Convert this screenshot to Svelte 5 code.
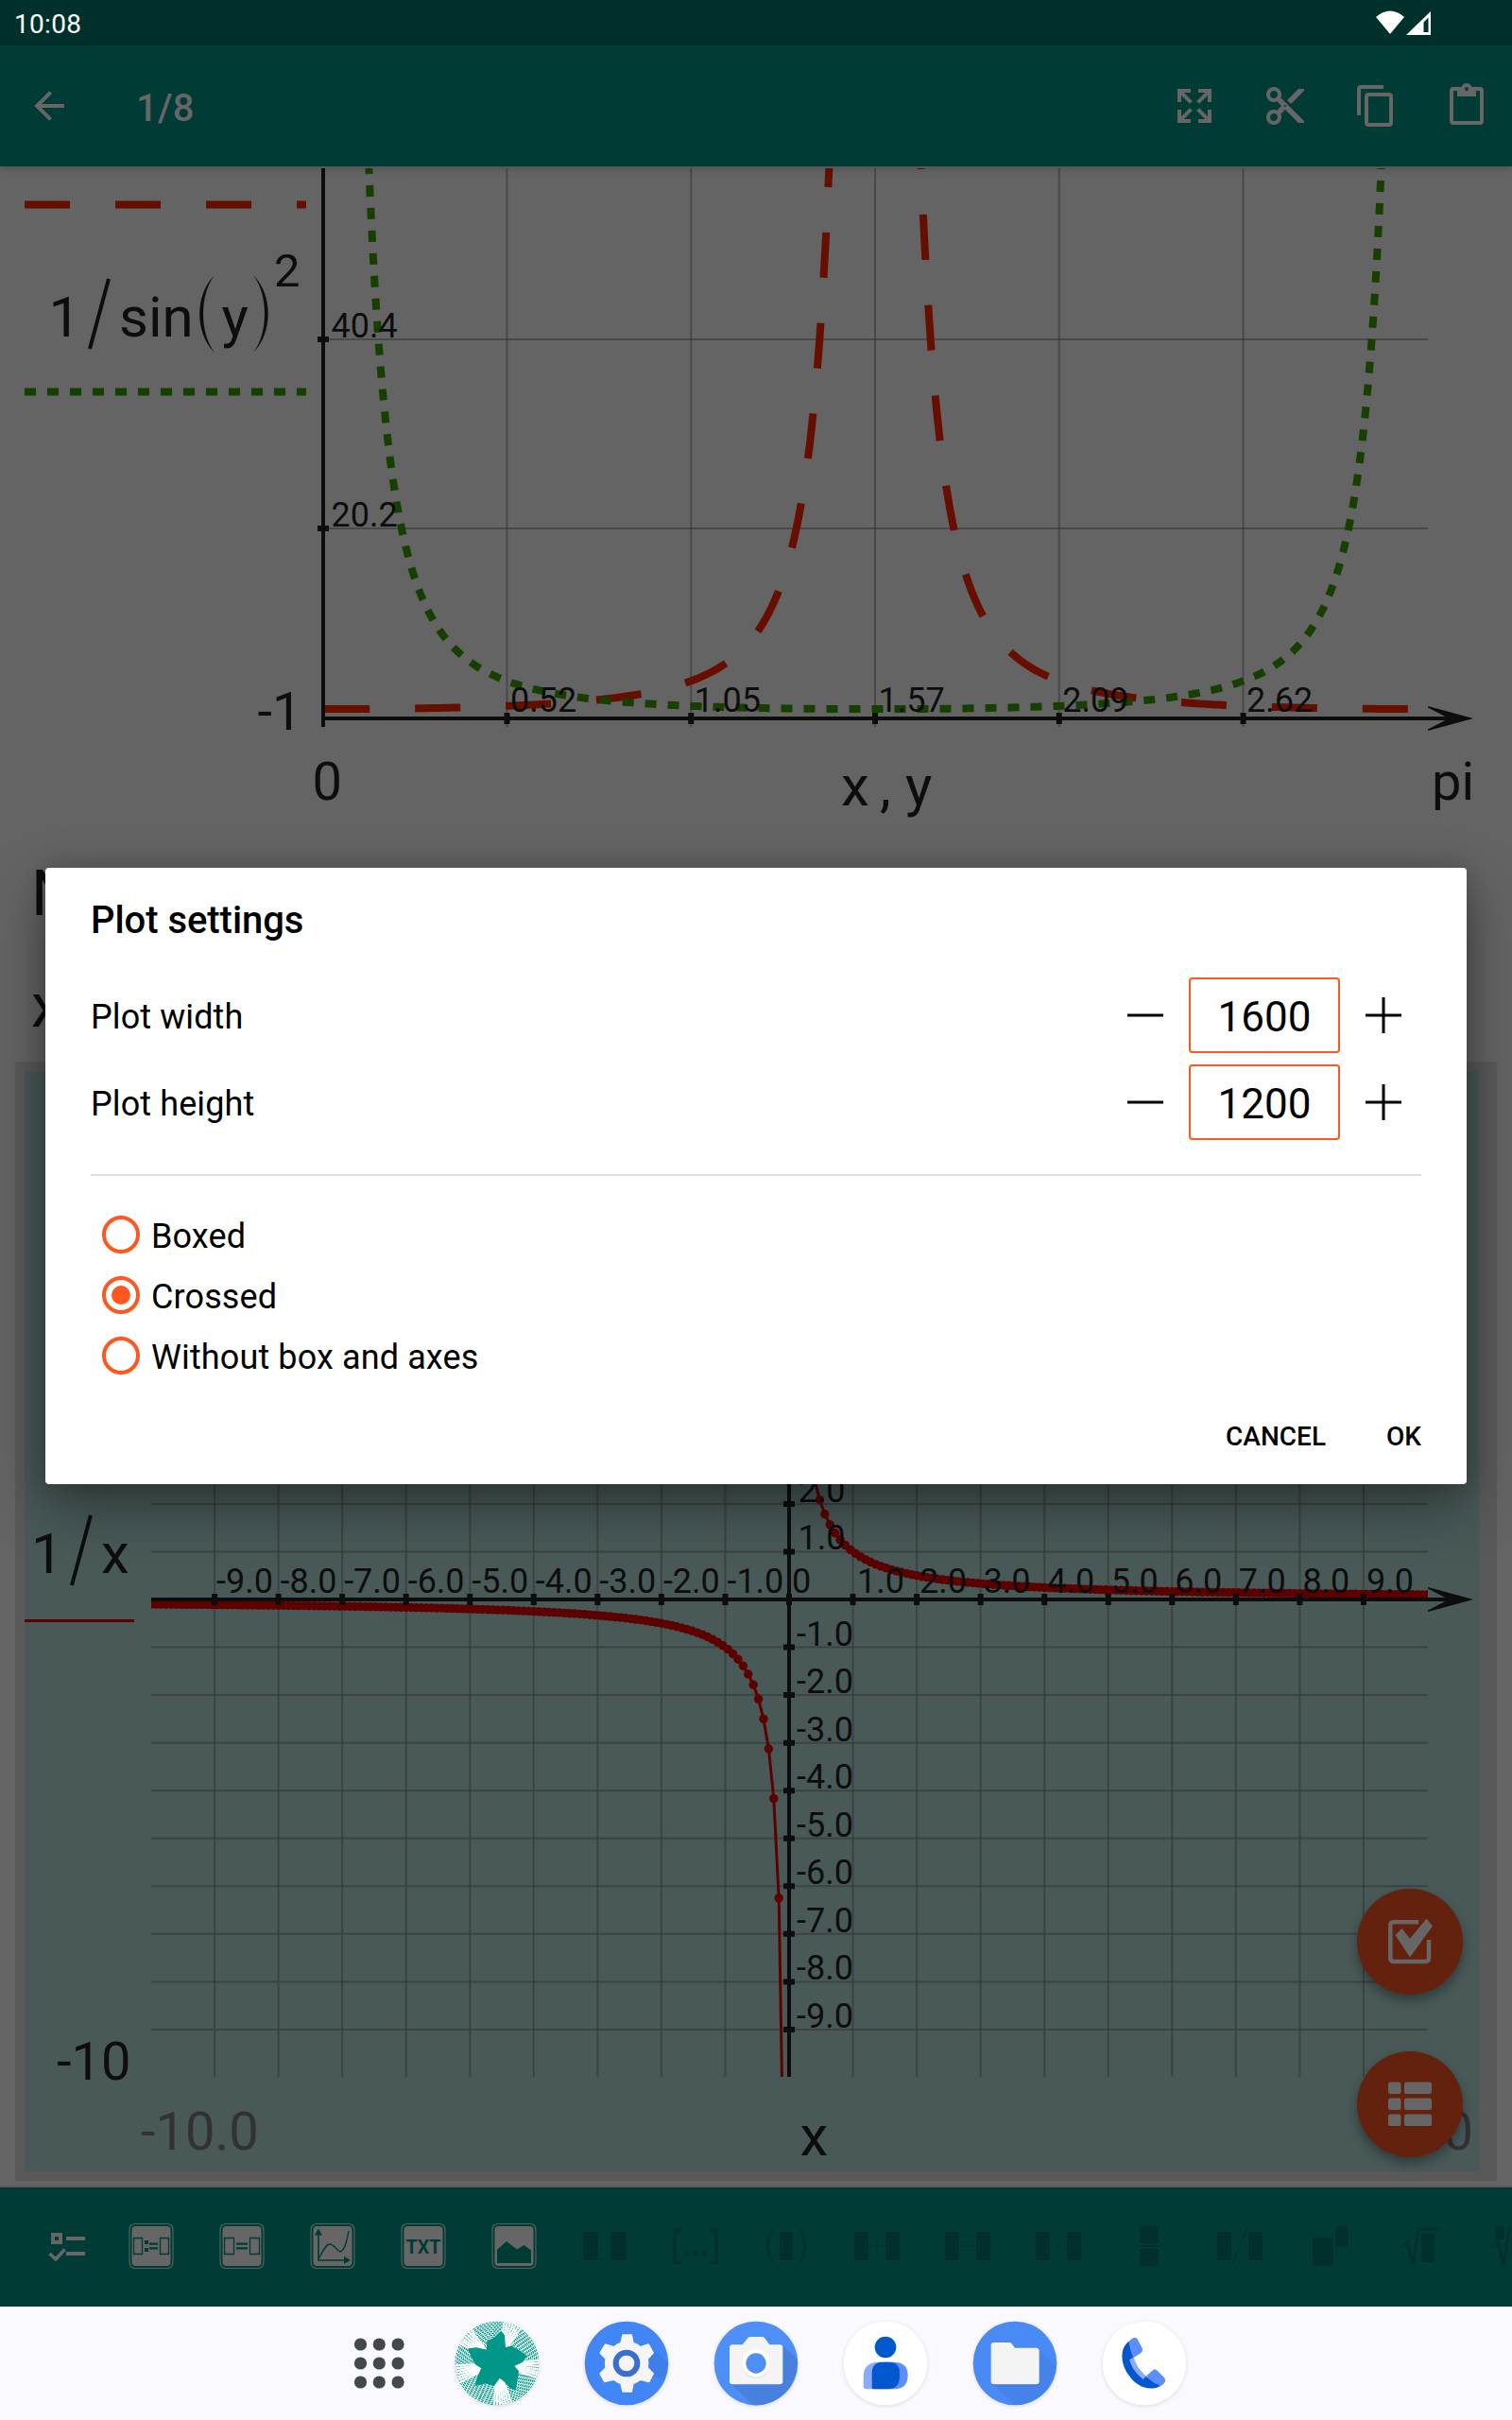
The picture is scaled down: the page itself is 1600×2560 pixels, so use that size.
<script>
  const range = (a, b) => Array.from({ length: b - a + 1 }, (_, i) => a + i);
  const line = (pts) => 'M' + pts.map((p) => p[0].toFixed(2) + ' ' + p[1].toFixed(2)).join('L');

  // First plot: x in [0, pi], 9.9 px per unit vertically
  const X0 = 341.7, XW = 1168.6, Y0 = 760, TOP = 58.79;
  const sample = (f, a, b, n = 160) =>
    line(range(0, n).map((i) => {
      const t = a + ((b - a) * i) / n;
      return [X0 + (t / Math.PI) * XW, Y0 - 9.9 * f(t)];
    }));
  const edge = Math.asin(1 / Math.sqrt(TOP));
  const sec2 = (t) => 1 / Math.cos(t) ** 2;
  const csc2 = (t) => 1 / Math.sin(t) ** 2;
  const redLeft = sample(sec2, 0, Math.PI / 2 - edge);
  const redRight = sample(sec2, Math.PI / 2 + edge, Math.PI);
  const green = sample(csc2, edge, Math.PI - edge, 400);
  const xTicks = ['0.52', '1.05', '1.57', '2.09', '2.62'].map((t, i) => ({ t, x: X0 + (XW / 6) * (i + 1) }));
  const yTicks = [{ t: '40.4', y: 359 }, { t: '20.2', y: 559 }];

  // Second plot: 1/x on [-10, 10]
  const CX = 835, CY = 1692, SX = 67.55, SY = 50.55;
  const gx = (v) => CX + v * SX;
  const gy = (v) => CY - v * SY;
  const ks = range(-9, 9).filter((k) => k !== 0);
  const negPts = range(0, 124).map((k) => -10 + 0.08 * k).map((v) => [gx(v), gy(1 / v)]);
  const posPts = range(1, 125).map((k) => 0.08 * k).map((v) => [gx(v), gy(1 / v)]);
  const dots = [...negPts, ...posPts];

  // Launcher icon texture
  const rings = range(8, 44).filter((r) => r % 2 === 0);
  const rays = [-68, -140, 8, 82, 165].flatMap((a) => [-12, -8, -4, 0, 4, 8, 12].map((d) => a + d)).map((a) => {
    const r = (a * Math.PI) / 180;
    return [Math.cos(r) * 134, Math.sin(r) * 134];
  });

  const tools = ['list', 'assign', 'equal', 'plot', 'txt', 'image', 'comma', 'interval', 'paren', 'plus', 'minus', 'dot', 'frac', 'slash', 'power', 'sqrt', 'root'];
  const pairTools = ['plus', 'minus', 'dot', 'slash'];
  const tileTools = ['assign', 'equal', 'plot', 'txt', 'image'];
  const actions = [
    'M9.5,13.09L10.91,14.5L6.41,19H10V21H3V14H5V17.59L9.5,13.09M10.91,9.5L9.5,10.91L5,6.41V10H3V3H10V5H6.41L10.91,9.5M14.5,13.09L19,17.59V14H21V21H14V19H17.59L13.09,14.5L14.5,13.09M13.09,9.5L17.59,5H14V3H21V10H19V6.41L14.5,10.91L13.09,9.5Z',
    'M19,3L13,9L15,11L22,4V3M12,12.5A.5,.5 0 0,1 11.5,12A.5,.5 0 0,1 12,11.5A.5,.5 0 0,1 12.5,12A.5,.5 0 0,1 12,12.5M6,20A2,2 0 0,1 4,18C4,16.89 4.9,16 6,16A2,2 0 0,1 8,18C8,19.11 7.1,20 6,20M6,8A2,2 0 0,1 4,6C4,4.89 4.9,4 6,4A2,2 0 0,1 8,6C8,7.11 7.1,8 6,8M9.64,7.64C9.87,7.14 10,6.59 10,6A4,4 0 0,0 6,2A4,4 0 0,0 2,6A4,4 0 0,0 6,10C6.59,10 7.14,9.87 7.64,9.64L10,12L7.64,14.36C7.14,14.13 6.59,14 6,14A4,4 0 0,0 2,18A4,4 0 0,0 6,22A4,4 0 0,0 10,18C10,17.41 9.87,16.86 9.64,16.36L12,14L19,21H22V20L9.64,7.64Z',
    'M19,21H8V7H19M19,5H8A2,2 0 0,0 6,7V21A2,2 0 0,0 8,23H19A2,2 0 0,0 21,21V7A2,2 0 0,0 19,5M16,1H4A2,2 0 0,0 2,3V17H4V3H16V1Z',
    'M19,20H5V4H7V7H17V4H19M12,2A1,1 0 0,1 13,3A1,1 0 0,1 12,4A1,1 0 0,1 11,3A1,1 0 0,1 12,2M19,2H14.82C14.4,.84 13.3,0 12,0C10.7,0 9.6,.84 9.18,2H5A2,2 0 0,0 3,4V20A2,2 0 0,0 5,22H19A2,2 0 0,0 21,20V4A2,2 0 0,0 19,2Z'
  ];

  let sizes = $state([{ label: 'Plot width', value: 1600 }, { label: 'Plot height', value: 1200 }]);
  const styles = ['Boxed', 'Crossed', 'Without box and axes'];
  let selected = $state('Crossed');
</script>

<div class="screen">
  <div class="status">
    <span class="time">10:08</span>
    <svg class="signals" width="60" height="48" viewBox="1455 0 60 48">
      <path fill="#fff" d="M1456 18Q1471 5 1486 18L1471 36Z" />
      <path fill="#fff" fill-rule="evenodd" d="M1514 12V37H1488ZM1511.5 18.5L1506.5 23.5V34H1511.5Z" />
    </svg>
  </div>

  <header class="appbar">
    <svg class="back" width="48" height="48" viewBox="0 0 24 24"><path d="M20 11v2H8l5.5 5.5-1.42 1.42L4.16 12l7.92-7.92L13.5 5.5 8 11z" /></svg>
    <h1>1/8</h1>
    <div class="actions">
      {#each actions as d}
        <svg width="48" height="48" viewBox="0 0 24 24"><path {d} /></svg>
      {/each}
    </div>
  </header>

  <main class="doc">
    <svg class="plot" width="1600" height="724" viewBox="0 176 1600 724">
      <defs><clipPath id="c1"><rect x="342" y="178" width="1220" height="600" /></clipPath></defs>
      <path class="red" stroke-dasharray="48" d="M26 216.5H324" />
      <path class="green" stroke-dasharray="12" d="M26 414.5H324" />
      <g class="ink f60">
        <text x="51.500" y="356">1</text>
        <text x="126" y="356">sin</text>
        <text x="234.500" y="356">y</text>
        <text x="290" y="303" class="f49">2</text>
        <path class="stroke" stroke-width="4" d="M95 369L115 295" />
        <path d="M227 291C206 312 206 352 227 373C211 352 211 312 227 291Z" />
        <path d="M268 291C289 312 289 352 268 373C284 352 284 312 268 291Z" />
      </g>
      <g class="grid">
        {#each xTicks as t}<path d="M{t.x} 178V769" />{/each}
        {#each yTicks as t}<path d="M342 {t.y}H1511" />{/each}
      </g>
      <g clip-path="url(#c1)">
        <path class="red" stroke-dasharray="48" stroke-dashoffset="-1.500" d={redLeft} />
        <path class="red" stroke-dasharray="48" stroke-dashoffset="47" d={redRight} />
        <path class="green" stroke-dasharray="12" stroke-dashoffset="6" d={green} />
      </g>
      <g class="ink f36">
        <path class="stroke" stroke-width="4" d="M342 178V769M342 760H1540" />
        {#each xTicks as t}
          <path class="stroke" stroke-width="6" d="M{t.x} 754V766" />
          <text x={t.x + 3.5} y="753">{t.t}</text>
        {/each}
        {#each yTicks as t}
          <path class="stroke" stroke-width="6" d="M336 {t.y}H348" />
          <text x="350.500" y={t.y - 2}>{t.t}</text>
        {/each}
        <path d="M1511 747L1559 760L1511 773V771.5L1533 760L1511 748.5Z" />
      </g>
      <g class="ink f56">
        <text x="272.500" y="772">-1</text>
        <text x="330.500" y="846">0</text>
        <text x="1515" y="846">pi</text>
      </g>
      <g class="ink f60">
        <text x="890" y="852">x</text>
        <text x="931" y="852">,</text>
        <text x="958" y="852">y</text>
      </g>
    </svg>

    <div class="para">
      <p class="heading">N</p>
      <p class="body">x</p>
    </div>

    <section class="frame">
      <svg class="plot" width="1539" height="1164" viewBox="26 1133 1539 1164">
        <defs><clipPath id="c2"><rect x="160" y="1186" width="1351" height="1011" /></clipPath></defs>
        <g class="grid">
          {#each ks as k}
            <path d="M{gx(k)} 1186V2197M160 {gy(k)}H1511" />
          {/each}
        </g>
        <g clip-path="url(#c2)">
          <path class="curve" d={line(negPts)} />
          <path class="curve" d={line(posPts)} />
          {#each dots as p}<circle class="node" cx={p[0]} cy={p[1]} r="4.7" />{/each}
        </g>
        <path class="legend" d="M26 1714.500H142" />
        <g class="ink f36">
          <path class="stroke" stroke-width="4" d="M160 1692H1540M{CX} 1186V2197" />
          <path class="stroke" stroke-width="6" d="M{CX} 1686V1698" />
          {#each ks as k}
            <path class="stroke" stroke-width="6" d="M{gx(k)} 1686V1698M829 {gy(k)}H841" />
            <text x={gx(k) + (k < 0 ? 2 : k === 1 ? 4.5 : 3)} y="1685">{k}.0</text>
            <text x={k < 0 ? 843 : 844.5} y={gy(k) - 2}>{k}.0</text>
          {/each}
          <text x="838" y="1685">0</text>
          <path d="M1511 1679L1559 1692L1511 1705V1703.500L1533 1692L1511 1680.500Z" />
        </g>
        <g class="ink f60">
          <text x="33" y="1664">1</text>
          <text x="107" y="1664">x</text>
          <text x="846.500" y="2280">x</text>
          <path class="stroke" stroke-width="4" d="M76 1677L96 1603" />
        </g>
        <text class="ink f56" x="60" y="2200">-10</text>
        <text class="faded f56" x="149" y="2274">-10.0</text>
        <text class="faded f56" x="1559" y="2274" text-anchor="end">10.0</text>
      </svg>
    </section>

    <div class="fab upper">
      <svg width="48" height="48" viewBox="1468 2030 48 48">
        <path fill="none" stroke="#666" stroke-width="4.500" d="M1501 2033.300H1475Q1471.300 2033.300 1471.300 2037V2071Q1471.300 2075 1475 2075H1508Q1512 2075 1512 2071V2052" />
        <path fill="#666" stroke="#64220e" stroke-width="2" paint-order="stroke" d="M1476.500 2047L1483.500 2040L1492 2051L1509.500 2029.500L1516 2037.500L1492 2070.500Z" />
      </svg>
    </div>
    <div class="fab lower">
      <svg width="46" height="48" viewBox="0 0 46 48">
        {#each [0.5, 17.5, 34.5] as y}
          <rect x="0" {y} width="13.500" height="12.500" rx="2.500" fill="#666" />
          <rect x="17" {y} width="29" height="12.500" rx="2.500" fill="#666" />
        {/each}
      </svg>
    </div>
  </main>

  <footer class="toolbar">
    {#each tools as t}
      <svg class="tool" width="96" height="126" viewBox="-48 -62 96 126">
        {#if tileTools.includes(t)}
          <rect class="outline" x="-23" y="-23.500" width="46" height="47" rx="6" />
          <rect class="lite" x="-20.500" y="-21" width="41" height="42" rx="4" />
        {/if}
        {#if t === 'list'}
          <path class="lite" fill-rule="evenodd" d="M-10 -14H2V-2H-10ZM-6 -10V-6H-2V-10ZM6 -10H26V-6H6ZM6 6H26V10H6Z" />
          <path fill="none" stroke="#666" stroke-width="3.500" d="M-11.500 8L-5 14L4.500 3.500" />
        {:else if t === 'assign'}
          <path class="thin" d="M-18.500 -8.500H-9.500V8.500H-18.500ZM9.500 -8.500H18.500V8.500H9.500Z" />
          <path class="cut" d="M-7 -6H-3V-2H-7ZM-7 2H-3V6H-7ZM-2 -3.500H7V-1.200H-2ZM-2 1.200H7V3.500H-2Z" />
        {:else if t === 'equal'}
          <path class="thin" d="M-18.500 -8.500H-8.500V8.500H-18.500ZM8.500 -8.500H18.500V8.500H8.500Z" />
          <path class="cut" d="M-6 -3.500H6V-1.200H-6ZM-6 1.200H6V3.500H-6Z" />
        {:else if t === 'plot'}
          <path class="cut" d="M-15.800 -13H-14.200V14.200H12V10.800L19 15L12 19V15.800H-15.800ZM-19 -11.500L-15 -18.500L-11 -11.500Z" />
          <path fill="none" stroke="#003b34" stroke-width="1.400" d="M-15 14C-11 6 -7 -2 -3 -2C2 -2 4 5 8 6C13 5 15 -6 17 -16" />
        {:else if t === 'txt'}
          <text class="txt" x="0" y="7.500" text-anchor="middle" textLength="37" lengthAdjust="spacingAndGlyphs">TXT</text>
        {:else if t === 'image'}
          <path class="cut" d="M-18 4L-8 -5L3 3.500L10.500 -1L18 4.500V18H-18Z" />
        {:else if t === 'comma'}
          <path class="dim" d="M-21 -15H-9Q-7 -15 -7 -13V13Q-7 15 -9 15H-21Q-23 15 -23 13V-13Q-23 -15 -21 -15ZM8 -15H21Q23 -15 23 -13V13Q23 15 21 15H8Q6 15 6 13V-13Q6 -15 8 -15ZM-4 12H-1L-3 17H-5Z" />
        {:else if t === 'interval'}
          <path class="dimline" stroke-width="3.500" d="M-15 -17H-22V17.500H-15M15 -17H22V17.500H15" />
          <path class="dim" d="M-12 5H-7V11H-12ZM-2.500 5H2.500V11H-2.500ZM7 5H12V11H7Z" />
        {:else if t === 'paren'}
          <path class="dimline" stroke-width="3" d="M-15 -17Q-24 0 -15 17M15 -17Q24 0 15 17" />
          <rect class="dim" x="-7" y="-15" width="14" height="30" rx="2" />
        {:else if pairTools.includes(t)}
          <rect class="dim" x="-24" y="-15" width="15" height="30" rx="2" />
          <rect class="dim" x="9" y="-15" width="15" height="30" rx="2" />
          {#if t === 'plus'}<path class="dimline" stroke-width="2" d="M-8 0H8M0 -8V8" />{/if}
          {#if t === 'minus'}<path class="dimline" stroke-width="2" d="M-8 0H8" />{/if}
          {#if t === 'dot'}<circle class="dim" r="2.300" />{/if}
          {#if t === 'slash'}<path class="dimline" stroke-width="2" d="M-8 20L8 -20" />{/if}
        {:else if t === 'frac'}
          <path class="dim" d="M-10 -21H10V-3H-10ZM-12 -1H12V1H-12ZM-10 3H10V21H-10Z" />
        {:else if t === 'power'}
          <rect class="dim" x="-19" y="-9" width="22" height="30" rx="2" />
          <rect class="dim" x="5" y="-21" width="14" height="22" rx="2" />
        {:else if t === 'sqrt'}
          <path class="dimline" stroke-width="3" d="M-20 1L-15 -4L-9 20L-3 -18H21" />
          <rect class="dim" x="0" y="-13" width="14" height="30" rx="2" />
        {:else}
          <path class="dimline" stroke-width="3" d="M-20 1L-15 -4L-9 20L-3 -18H21" />
          <rect class="dim" x="-18" y="-21" width="10" height="14" rx="1" />
        {/if}
      </svg>
    {/each}
  </footer>

  <nav class="dock">
    <svg class="apps" width="114" height="90" viewBox="0 0 114 90">
      {#each [25, 45, 65] as y}{#each [37.5, 57.3, 77.1] as x}<circle cx={x} cy={y} r="6.600" fill="#43474e" />{/each}{/each}
    </svg>
    <svg class="app" width="90" height="90" viewBox="-135 -135 270 270">
      <defs><clipPath id="c3"><circle r="133" /></clipPath></defs>
      <circle r="133" fill="#fff" />
      <g clip-path="url(#c3)">
        {#each rings as r}<circle r={r * 3} fill="none" stroke="#009688" stroke-width="4" stroke-dasharray="8 3" stroke-dashoffset={r * 5} />{/each}
        {#each rays as p}<path stroke="#fff" stroke-width="6" d="M0 0L{p[0]} {p[1]}" />{/each}
      </g>
      <path fill="#009688" stroke="#009688" stroke-width="4" stroke-linejoin="round" transform="translate(-170 -163)" d="M183 64L192 74L195 115L214 110L236 121L262 140L250 158L222 171L237 188L228 245L212 240L192 218L178 208L160 232L135 225L103 232L110 205L122 178L102 165L90 142L80 118L105 115L138 122L140 95L163 82Z" />
    </svg>
    <svg class="app" width="90" height="90" viewBox="445 28 270 270">
      <circle cx="580" cy="163" r="133" fill="#4285f4" />
      <path fill="#3c78df" opacity=".55" d="M667 122L709 160L700 215L640 195Z" />
      <path fill="#f5f5f5" stroke="#f5f5f5" stroke-width="4" stroke-linejoin="round" d="M568 73H596L601 98Q614 102 624 111L650 103L665 130L647 149Q650 163 647 177L665 196L651 222L624 215Q613 224 601 228L596 253H568L562 228Q550 224 540 215L510 222L496 196L514 177Q511 163 514 149L496 130L512 103L540 111Q550 102 562 98Z" />
      <circle cx="580" cy="163" r="43" fill="#3a6fd0" />
      <circle cx="580" cy="163" r="25" fill="#f5f5f5" />
    </svg>
    <svg class="app" width="90" height="90" viewBox="856 28 270 270">
      <circle cx="991" cy="163" r="133" fill="#4d8ef7" />
      <path fill="#4880dd" d="M1076 108L1120 145A133 133 0 0 1 982 296L910 226Z" />
      <path fill="#f4f4f4" d="M917 104H948L965 83Q968 79 973 79H1010Q1015 79 1018 83L1034 104H1066Q1076 104 1076 114V220Q1076 230 1066 230H917Q907 230 907 220V114Q907 104 917 104Z" />
      <circle cx="991" cy="166" r="44" fill="#ddd" />
      <circle cx="991" cy="163" r="38" fill="#4d8ef7" stroke="#fff" stroke-width="12" />
    </svg>
    <svg class="app" width="90" height="90" viewBox="37 28 270 270">
      <circle class="plate" cx="172" cy="163" r="133" />
      <circle cx="172" cy="112" r="34" fill="#0057ce" />
      <path fill="#8aabff" d="M150 159H170V245H112Q102 245 102 235V207Q102 159 150 159Z" />
      <path fill="#5b8eff" d="M170 159H196Q243 159 243 200Q243 245 200 245H170Z" />
      <path fill="#0057ce" d="M163 159H182Q217 159 217 195V205Q217 245 177 245H137Q129 245 129 237V195Q129 159 163 159Z" />
    </svg>
    <svg class="app" width="90" height="90" viewBox="448 28 270 270">
      <circle cx="583" cy="163" r="133" fill="#4a8af4" />
      <path fill="#447fe6" opacity=".8" d="M660 122L712 172A133 133 0 0 1 583 296L510 226Z" />
      <path fill="#3a6cc4" opacity=".5" d="M509 222H659V227Q658 234 650 234H518Q510 234 509 227Z" />
      <path fill="#f4f4f4" d="M517 97H567Q570 97 572 100L583 114H650Q660 114 660 124V220Q660 230 650 230H517Q507 230 507 220V107Q507 97 517 97Z" />
    </svg>
    <svg class="app" width="90" height="90" viewBox="860 28 270 270">
      <circle class="plate" cx="995" cy="163" r="133" />
      <path fill="#0057ce" d="M946 93C915 115 920 165 945 200C970 240 1015 253 1047 234L1000 205L948 152L962 144Z" />
      <path fill="#8aabff" d="M948 152L962 144C968 168 982 188 1000 204L991 214C970 198 953 176 948 152Z" />
      <path fill="#5b8eff" d="M946 93Q955 82 964 81Q970 81 974 88L988 115Q991 124 984 130L960 146Q950 125 946 93Z" />
      <path fill="#5b8eff" d="M1000 204L1020 186Q1028 179 1036 186L1057 207Q1064 214 1061 221Q1056 231 1047 235Q1022 226 1000 204Z" />
    </svg>
  </nav>

  <div class="dialog" role="dialog" aria-label="Plot settings">
    <h2>Plot settings</h2>
    {#each sizes as s}
      <div class="row">
        <span class="label">{s.label}</span>
        <button class="step" aria-label="Decrease" onclick={() => (s.value -= 100)}><svg width="40" height="40" viewBox="-20 -20 40 40"><path d="M-19 0H19" /></svg></button>
        <span class="value">{s.value}</span>
        <button class="step" aria-label="Increase" onclick={() => (s.value += 100)}><svg width="40" height="40" viewBox="-20 -20 40 40"><path d="M-19 0H19M0 -19V19" /></svg></button>
      </div>
    {/each}
    <hr />
    {#each styles as name}
      <button class="option" onclick={() => (selected = name)}>
        <span class="radio" class:on={selected === name}></span>
        <span class="text">{name}</span>
      </button>
    {/each}
    <div class="buttons"><span>CANCEL</span><span>OK</span></div>
  </div>
</div>

<style>
  :global(body) { background: #646464; }
  .screen {
    position: relative;
    width: 1600px;
    height: 2560px;
    overflow: hidden;
    display: grid;
    grid-template-rows: 48px 128px 2138px 126px 120px;
    background: #646464;
    font-family: Roboto, sans-serif;
  }
  svg { display: block; flex: none; }
  .status { display: flex; justify-content: space-between; background: #00302b; color: #fff; padding: 0 85px 0 15px; }
  .time { font-size: 28px; line-height: 46px; padding-top: 3px; height: 48px; box-sizing: border-box; letter-spacing: .3px; }
  .appbar {
    display: flex; align-items: center; padding: 0 24px 0 28px;
    background: #003c35; fill: #666; z-index: 1; box-shadow: 0 2px 8px rgba(0, 0, 0, .22);
  }
  h1 { margin: 0 0 0 68px; padding-top: 5px; color: #666; font-size: 40px; font-weight: 500; line-height: 48px; letter-spacing: .2px; }
  .actions { margin-left: auto; display: flex; gap: 48px; }
  .doc { position: relative; overflow: hidden; box-shadow: inset 0 -2px 0 #5a5a5a; }
  .ink { fill: #0d0d0d; }
  .faded { fill: #323232; }
  .stroke { stroke: #0d0d0d; fill: none; }
  .f36 { font-size: 36px; }
  .f49 { font-size: 49px; }
  .f56 { font-size: 56px; }
  .f60 { font-size: 60px; }
  .red, .green { fill: none; stroke-width: 8; }
  .red { stroke: #660e00; }
  .green { stroke: #174000; }
  .grid { stroke: #333; stroke-opacity: .55; stroke-width: 2; }
  .curve, .legend { fill: none; stroke: #5c0000; stroke-width: 3; }
  .node { fill: #5c0000; }
  .para { height: 223px; padding-left: 33px; color: #0d0d0d; box-sizing: border-box; }
  .para p { margin: 0; }
  .heading { font-size: 67px; line-height: 90px; }
  .body { font-size: 64px; line-height: 149px; }
  .frame {
    width: 1539px; height: 1164px; margin-left: 16px;
    border: solid #595959; border-width: 10px 19px 10px 10px; background: #485958;
  }
  .fab {
    position: absolute; left: 1436px; width: 112px; height: 112px; border-radius: 50%;
    display: flex; align-items: center; justify-content: center;
    background: #64220e; box-shadow: 0 6px 12px rgba(0, 0, 0, .35);
  }
  .upper { top: 1822px; }
  .lower { top: 1994px; }
  .toolbar { display: flex; padding-left: 16px; overflow: hidden; background: #003c35; }
  .lite { fill: #666; }
  .cut { fill: #003b34; }
  .thin { fill: none; stroke: #003b34; stroke-width: 1.3; }
  .outline { fill: none; stroke: #4f615e; stroke-width: 1.2; }
  .dim { fill: #00302b; }
  .dimline { fill: none; stroke: #00302b; }
  .txt { fill: #003b34; font-size: 20px; font-weight: 700; }
  .dock { display: flex; align-items: center; padding: 0 0 1px 343.500px; background: #faf9ff; }
  .app { margin: 0 23.500px; filter: drop-shadow(0 1px 2px rgba(0, 0, 0, .12)); }
  .plate { fill: #fff; }
  .dialog {
    position: absolute; left: 48px; top: 918px; width: 1504px; height: 652px; box-sizing: border-box;
    padding: 0 48px; background: #fff; border-radius: 4px; color: #000; z-index: 2;
    display: flex; flex-direction: column;
    box-shadow: 0 22px 60px rgba(0, 0, 0, .4), 0 0 24px rgba(0, 0, 0, .15);
  }
  h2 { margin: 0 0 4px; font-size: 40px; font-weight: 500; line-height: 112px; letter-spacing: -.05px; }
  .row { display: flex; align-items: center; height: 80px; margin-bottom: 12px; }
  .label { flex: 1; font-size: 36px; line-height: 76px; padding-top: 4px; letter-spacing: .1px; }
  .value {
    width: 160px; height: 80px; box-sizing: border-box; border: 2px solid #ff5722; border-radius: 4px;
    text-align: center; font-size: 44px; line-height: 80px;
  }
  button { border: 0; padding: 0; background: none; font: inherit; color: inherit; }
  .step { width: 92px; display: flex; justify-content: center; }
  .step:last-child { margin-right: -6px; }
  .step path { stroke: #000; stroke-width: 3; }
  hr { width: 100%; height: 2px; margin: 24px 0 30px; border: 0; background: #dedede; flex: none; }
  .option { display: flex; align-items: center; gap: 12px; height: 64px; padding-left: 12px; text-align: left; }
  .radio { width: 40px; height: 40px; box-sizing: border-box; border: 4px solid #ff5722; border-radius: 50%; display: grid; place-items: center; }
  .on::after { content: ''; width: 20px; height: 20px; border-radius: 50%; background: #ff5722; }
  .text { font-size: 36px; line-height: 60px; padding-top: 3px; letter-spacing: .12px; }
  .buttons { display: flex; justify-content: flex-end; gap: 64px; margin-top: 37px; font-size: 28px; font-weight: 500; line-height: 34px; }
</style>
